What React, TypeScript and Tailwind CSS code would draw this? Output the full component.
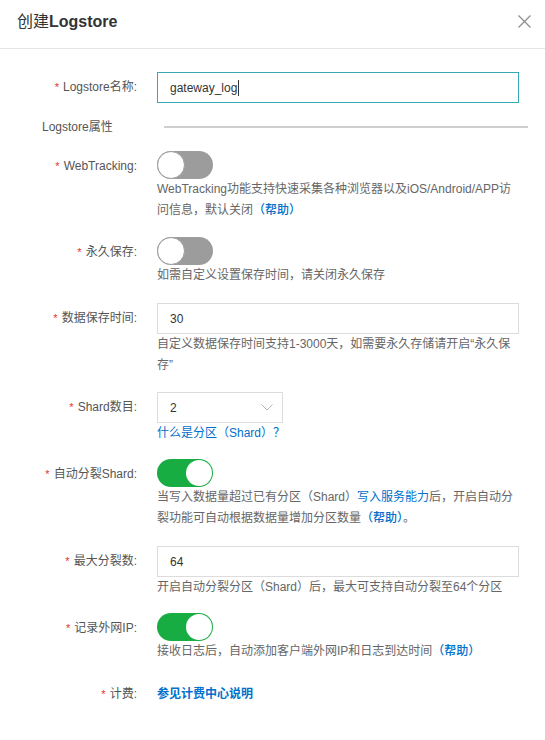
import React from "react";

const FONT = "font-['Liberation_Sans','Noto_Sans_CJK_SC',sans-serif]";

function Label({ children, h }: { children: React.ReactNode; h: string }) {
  return (
    <div className={`w-[157px] shrink-0 pr-[20px] text-right text-[12px] text-[#555] ${h}`}>
      <span className="mr-[4px] text-[11px] text-[#e5322d]">*</span>
      {children}:
    </div>
  );
}

function Switch({ on }: { on: boolean }) {
  return on ? (
    <div className="flex h-[28px] w-[56px] items-center justify-end rounded-full bg-[#18ad43] p-[1px]">
      <div className="h-[26px] w-[26px] rounded-full bg-white" />
    </div>
  ) : (
    <div className="flex h-[28px] w-[56px] items-center justify-start rounded-full bg-[#9c9c9c]">
      <div className="h-[28px] w-[28px] rounded-full border border-[#9c9c9c] bg-white" />
    </div>
  );
}

function Desc({ children }: { children: React.ReactNode }) {
  return <div className="text-[12px] leading-[21px] text-[#666]">{children}</div>;
}

const Link = ({ children, weight }: { children: React.ReactNode; weight?: string }) => (
  <span className={`text-[#0070cc] ${weight ?? ""}`}>{children}</span>
);

function Input({ value, focus, caret }: { value: string; focus?: boolean; caret?: boolean }) {
  return (
    <div
      className={`flex h-[31px] w-[362px] items-center border px-[12px] text-[12px] text-[#333] ${
        focus ? "border-[#35aab4]" : "border-[#dcdcdc]"
      }`}
    >
      {value}
      {caret && <span className="ml-[1px] inline-block h-[16px] w-[1px] bg-[#333]" />}
    </div>
  );
}

export default function App() {
  return (
    <div className={`w-[545px] h-[740px] bg-white ${FONT}`}>
      <div className="flex h-[49px] items-center justify-between border-b border-[#e5e5e5] pl-[17px] pr-[14px] pb-[5px]">
        <div className="text-[16px] text-[#333]">
          <span>创建</span>
          <span className="font-bold">Logstore</span>
        </div>
        <svg width="13" height="13" viewBox="0 0 13 13" className="mb-[1px]">
          <path d="M0.5 0.5 L12.5 12.5 M12.5 0.5 L0.5 12.5" stroke="#8c8c8c" strokeWidth="1.2" />
        </svg>
      </div>

      <div className="flex flex-col pt-[23px]">
        <div className="flex">
          <Label h="leading-[31px]">Logstore名称</Label>
          <Input value="gateway_log" focus caret />
        </div>

        <div className="mt-[14px] flex h-[20px] items-center">
          <div className="w-[164px] shrink-0 pl-[42px] text-[12px] text-[#555]">Logstore属性</div>
          <div className="mr-[17px] h-[2px] flex-1 bg-[#cfcfcf]" />
        </div>

        <div className="mt-[14px] flex">
          <Label h="leading-[30px]">WebTracking</Label>
          <div className="w-[362px]">
            <Switch on={false} />
            <Desc>
              WebTracking功能支持快速采集各种浏览器以及iOS/Android/APP访
              <br />
              问信息，默认关闭<Link weight="font-medium">（帮助）</Link>
            </Desc>
          </div>
        </div>

        <div className="mt-[16px] flex">
          <Label h="leading-[30px]">永久保存</Label>
          <div className="w-[362px]">
            <Switch on={false} />
            <Desc>如需自定义设置保存时间，请关闭永久保存</Desc>
          </div>
        </div>

        <div className="mt-[17px] flex">
          <Label h="leading-[31px]">数据保存时间</Label>
          <div className="w-[362px]">
            <Input value="30" />
            <Desc>
              自定义数据保存时间支持1-3000天，如需要永久存储请开启“永久保
              <br />
              存”
            </Desc>
          </div>
        </div>

        <div className="mt-[16px] flex">
          <Label h="leading-[31px]">Shard数目</Label>
          <div className="w-[362px]">
            <div className="flex h-[31px] w-[126px] items-center justify-between border border-[#dcdcdc] pl-[12px] pr-[9px] text-[12px] text-[#333]">
              <span>2</span>
              <svg width="12" height="7" viewBox="0 0 12 7">
                <path d="M0.5 0.5 L6 6 L11.5 0.5" fill="none" stroke="#b5b5b5" strokeWidth="1" />
              </svg>
            </div>
            <div className="text-[12px] leading-[21px]">
              <Link>什么是分区（Shard）？</Link>
            </div>
          </div>
        </div>

        <div className="mt-[15px] flex">
          <Label h="leading-[30px]">自动分裂Shard</Label>
          <div className="w-[362px]">
            <Switch on />
            <Desc>
              当写入数据量超过已有分区（Shard）<Link>写入服务能力</Link>后，开启自动分
              <br />
              裂功能可自动根据数据量增加分区数量<Link weight="font-medium">（帮助）</Link>。
            </Desc>
          </div>
        </div>

        <div className="mt-[17px] flex">
          <Label h="leading-[31px]">最大分裂数</Label>
          <div className="w-[362px]">
            <Input value="64" />
            <Desc>开启自动分裂分区（Shard）后，最大可支持自动分裂至64个分区</Desc>
          </div>
        </div>

        <div className="mt-[15px] flex">
          <Label h="leading-[30px]">记录外网IP</Label>
          <div className="w-[362px]">
            <Switch on />
            <Desc>
              接收日志后，自动添加客户端外网IP和日志到达时间<Link weight="font-medium">（帮助）</Link>
            </Desc>
          </div>
        </div>

        <div className="mt-[21px] flex">
          <Label h="leading-[22px]">计费</Label>
          <div className="w-[362px] text-[12px] leading-[22px]">
            <Link weight="font-bold">参见计费中心说明</Link>
          </div>
        </div>
      </div>
    </div>
  );
}
